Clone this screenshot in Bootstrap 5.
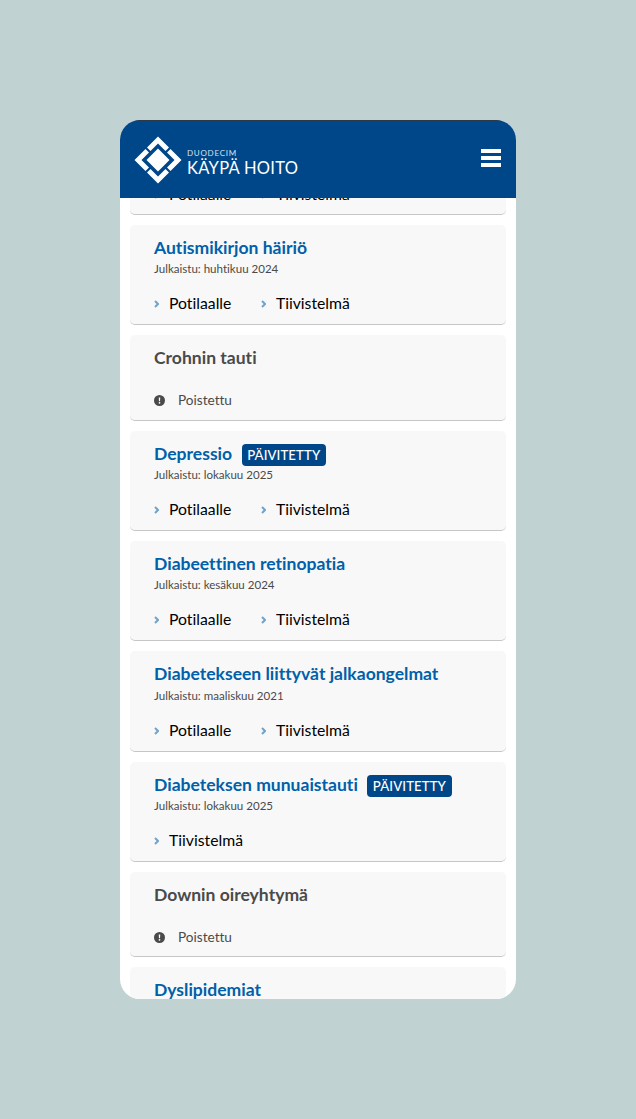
<!doctype html><html lang="fi"><head>
<meta charset="utf-8"/><meta name="viewport" content="width=device-width,initial-scale=1"/>
<title>Käypä hoito</title>
<link href="https://cdn.jsdelivr.net/npm/bootstrap@5.3.2/dist/css/bootstrap.min.css" rel="stylesheet">
<style>
html,body{height:100%}
body{background:#c1d2d3;font-family:Lato,"Liberation Sans",sans-serif;padding:120px;padding-bottom:0;font-variant-ligatures:none}
.phone{width:396px;height:879px;border-radius:20px;background:#fff}
.topbar{height:78px;background:#004789;border-top:1px solid #2b3a4a;padding:0 15px 0 14px}
.brand-text{padding-top:6px;margin-left:5px}
.brand-small{font-size:8px;letter-spacing:.75px;line-height:10px;color:#d5e2ef;font-weight:400}
.brand-big{font-size:16.5px;line-height:20px;color:#fff;font-weight:400;letter-spacing:.3px}
.burger{margin-bottom:3.4px}
.burger span{display:block;width:20px;height:3.5px;background:#fff;margin-bottom:3.5px}
.burger span:last-child{margin-bottom:0}
.scroller{padding:0 10px;margin-top:-83.4px}
.entry{background:#f8f8f8;border-radius:5px;border-bottom:1px solid #c6c6c6;padding:11px 24px 0;margin-bottom:10px;height:100.33px}
.entry.gone{height:85.33px}
.entry.cut{padding-top:52px}
.entry-title{font-size:17.55px;font-weight:700;line-height:24px;color:#0060a9;text-decoration:none}
.entry.gone .entry-title{color:#4a4a4a}
.tag{background:#004789;color:#fff;font-size:13.2px;font-weight:500;line-height:22px;height:22px;padding:0 5.5px;border-radius:4px;margin-left:9.5px;margin-top:2px;letter-spacing:.1px}
.pubdate{font-size:11.55px;line-height:14px;color:#4a4a4a;margin-top:2.5px}
.entry-links{margin-top:16px;font-size:15.75px;line-height:21px;gap:29.5px}
.entry-links a{color:#000;text-decoration:none;display:flex;align-items:center}
.entry-links svg{width:5px;height:8px;margin-right:10px;margin-top:3px}
.removed{font-size:13.6px;line-height:18px;color:#4a4a4a;margin-top:21px}
.removed svg{width:11px;height:11px;margin-right:13px;margin-top:1px}
</style>
</head><body>
<div class="phone d-flex flex-column overflow-hidden">
  <header class="topbar d-flex align-items-center justify-content-between flex-shrink-0 position-relative z-1">
    <a class="d-flex align-items-center text-decoration-none" href="#">
      <svg width="48" height="48" viewBox="0 0 48 48">
        <polygon fill="#fff" points="24,12.5 35.5,24 24,35.5 12.5,24"/>
        <g fill="#fff">
          <polygon id="chev" points="24,0.5 35,11.5 31.5,15 24,7.5 16.5,15 13,11.5"/>
          <use href="#chev" transform="rotate(90 24 24)"/>
          <use href="#chev" transform="rotate(180 24 24)"/>
          <use href="#chev" transform="rotate(270 24 24)"/>
        </g>
      </svg>
      <div class="brand-text">
        <div class="brand-small">DUODECIM</div>
        <div class="brand-big">KÄYPÄ HOITO</div>
      </div>
    </a>
    <div class="burger"><span></span><span></span><span></span></div>
  </header>
  <main class="scroller flex-grow-1">
    <div class="entry cut"><div class="entry-links d-flex"><a href="#"><svg viewBox="0 0 5 8"><path d="M1 1l3 3-3 3" fill="none" stroke="#6fa3cc" stroke-width="2"/></svg>Potilaalle</a><a href="#"><svg viewBox="0 0 5 8"><path d="M1 1l3 3-3 3" fill="none" stroke="#6fa3cc" stroke-width="2"/></svg>Tiivistelmä</a></div></div>
    <div class="entry"><a class="entry-title" href="#">Autismikirjon häiriö</a><div class="pubdate">Julkaistu: huhtikuu 2024</div><div class="entry-links d-flex"><a href="#"><svg viewBox="0 0 5 8"><path d="M1 1l3 3-3 3" fill="none" stroke="#6fa3cc" stroke-width="2"/></svg>Potilaalle</a><a href="#"><svg viewBox="0 0 5 8"><path d="M1 1l3 3-3 3" fill="none" stroke="#6fa3cc" stroke-width="2"/></svg>Tiivistelmä</a></div></div>
    <div class="entry gone"><span class="entry-title">Crohnin tauti</span><div class="removed d-flex align-items-center"><svg viewBox="0 0 16 16"><circle cx="8" cy="8" r="8" fill="#4a4a4a"/><path d="M6.9 3.5h2.2l-.3 5.6H7.2zM8 10a1.3 1.3 0 1 1 0 2.6A1.3 1.3 0 0 1 8 10z" fill="#fff"/></svg>Poistettu</div></div>
    <div class="entry"><div class="d-flex align-items-center"><a class="entry-title" href="#">Depressio</a><span class="tag">PÄIVITETTY</span></div><div class="pubdate">Julkaistu: lokakuu 2025</div><div class="entry-links d-flex"><a href="#"><svg viewBox="0 0 5 8"><path d="M1 1l3 3-3 3" fill="none" stroke="#6fa3cc" stroke-width="2"/></svg>Potilaalle</a><a href="#"><svg viewBox="0 0 5 8"><path d="M1 1l3 3-3 3" fill="none" stroke="#6fa3cc" stroke-width="2"/></svg>Tiivistelmä</a></div></div>
    <div class="entry"><a class="entry-title" href="#">Diabeettinen retinopatia</a><div class="pubdate">Julkaistu: kesäkuu 2024</div><div class="entry-links d-flex"><a href="#"><svg viewBox="0 0 5 8"><path d="M1 1l3 3-3 3" fill="none" stroke="#6fa3cc" stroke-width="2"/></svg>Potilaalle</a><a href="#"><svg viewBox="0 0 5 8"><path d="M1 1l3 3-3 3" fill="none" stroke="#6fa3cc" stroke-width="2"/></svg>Tiivistelmä</a></div></div>
    <div class="entry"><a class="entry-title" href="#">Diabetekseen liittyvät jalkaongelmat</a><div class="pubdate">Julkaistu: maaliskuu 2021</div><div class="entry-links d-flex"><a href="#"><svg viewBox="0 0 5 8"><path d="M1 1l3 3-3 3" fill="none" stroke="#6fa3cc" stroke-width="2"/></svg>Potilaalle</a><a href="#"><svg viewBox="0 0 5 8"><path d="M1 1l3 3-3 3" fill="none" stroke="#6fa3cc" stroke-width="2"/></svg>Tiivistelmä</a></div></div>
    <div class="entry"><div class="d-flex align-items-center"><a class="entry-title" href="#">Diabeteksen munuaistauti</a><span class="tag">PÄIVITETTY</span></div><div class="pubdate">Julkaistu: lokakuu 2025</div><div class="entry-links d-flex"><a href="#"><svg viewBox="0 0 5 8"><path d="M1 1l3 3-3 3" fill="none" stroke="#6fa3cc" stroke-width="2"/></svg>Tiivistelmä</a></div></div>
    <div class="entry gone"><span class="entry-title">Downin oireyhtymä</span><div class="removed d-flex align-items-center"><svg viewBox="0 0 16 16"><circle cx="8" cy="8" r="8" fill="#4a4a4a"/><path d="M6.9 3.5h2.2l-.3 5.6H7.2zM8 10a1.3 1.3 0 1 1 0 2.6A1.3 1.3 0 0 1 8 10z" fill="#fff"/></svg>Poistettu</div></div>
    <div class="entry"><a class="entry-title" href="#">Dyslipidemiat</a></div>
  </main>
</div>
<script src="https://cdn.jsdelivr.net/npm/bootstrap@5.3.2/dist/js/bootstrap.bundle.min.js"></script>
</body></html>
